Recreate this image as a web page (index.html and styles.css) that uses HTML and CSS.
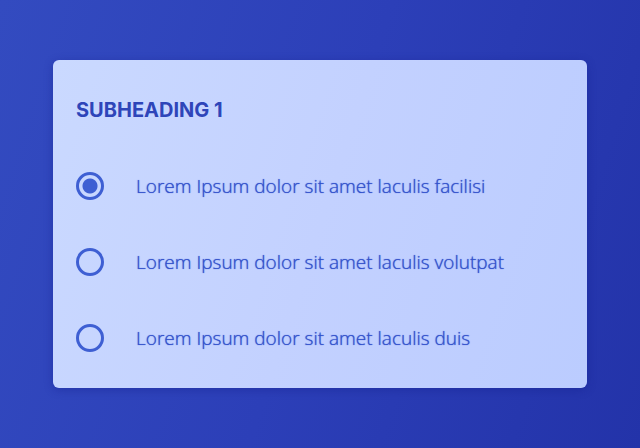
FILE: index.html
```html
<!DOCTYPE html>
<html lang="en">
<head>
<meta charset="utf-8">
<meta name="viewport" content="width=device-width, initial-scale=1">
<title>Subheading 1</title>
<link rel="stylesheet" href="styles.css">
</head>
<body>
<main class="page">
  <form class="card">
    <fieldset class="group">
      <legend class="heading">SUBHEADING 1</legend>
      <div class="options">
        <label class="option"><input class="radio" type="radio" name="choice" value="facilisi" checked><span>Lorem Ipsum dolor sit amet laculis facilisi</span></label>
        <label class="option"><input class="radio" type="radio" name="choice" value="volutpat"><span>Lorem Ipsum dolor sit amet laculis volutpat</span></label>
        <label class="option"><input class="radio" type="radio" name="choice" value="duis"><span>Lorem Ipsum dolor sit amet laculis duis</span></label>
      </div>
    </fieldset>
  </form>
</main>
</body>
</html>
```
FILE: styles.css
```css
* {
  box-sizing: border-box;
}

body {
  margin: 0;
}

.page {
  display: grid;
  align-items: center;
  min-height: 100vh;
  padding: 24px 53px;
  background: linear-gradient(108deg, #334bc0 0%, #2c3fb8 50%, #2333a9 100%);
}

.card {
  padding: 36px 23px;
  border-radius: 6px;
  background: linear-gradient(108deg, #cad9ff 0%, #c3d1ff 50%, #bbccff 100%);
  box-shadow: 0 2px 8px rgba(20, 30, 140, 0.4);
}

.group {
  min-width: 0;
  margin: 0;
  padding: 0;
  border: 0;
}

.heading {
  padding: 0;
  color: #2e45b9;
  font: 700 20px/28px Inter, sans-serif;
}

.options {
  display: grid;
  gap: 48px;
  padding-top: 48px;
}

.option {
  display: flex;
  align-items: center;
  gap: 32px;
  color: #3352cc;
  font: 300 19px/28px "Open Sans", sans-serif;
  text-shadow: 0 0 1px currentColor;
}

.radio {
  flex: none;
  appearance: none;
  width: 28px;
  height: 28px;
  margin: 0;
  border: 3px solid #3e5fd3;
  border-radius: 50%;
}

.radio:checked {
  background: radial-gradient(circle, #3e5fd3 7px, transparent 8px);
}
```
